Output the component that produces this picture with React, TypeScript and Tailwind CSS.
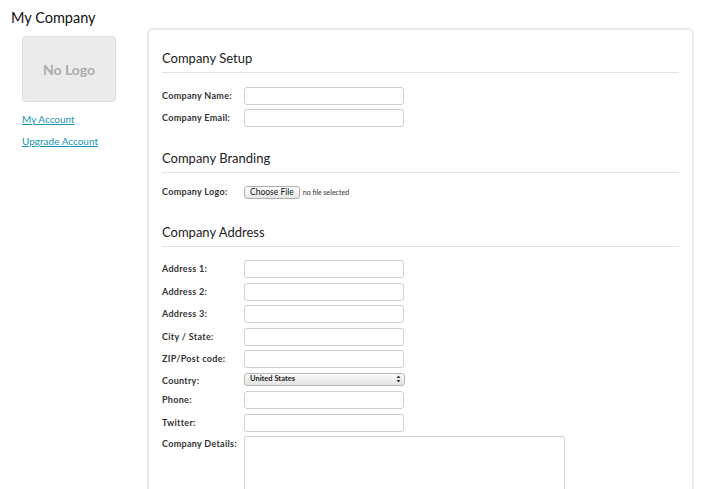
import React from "react";

const Field = ({ label }: { label: string }) => (
  <div className="flex items-center">
    <label className="w-[82px] shrink-0 text-[9px] font-bold tracking-[0.3px] text-[#333]">
      {label}
    </label>
    <input
      type="text"
      className="w-[160px] h-[18px] border border-[#cfcfcf] rounded-[3px] bg-white outline-none"
    />
  </div>
);

const SectionTitle = ({ children, className = "" }: { children: React.ReactNode; className?: string }) => (
  <h2
    className={`text-[13px] leading-[18px] text-[#222] pb-[5px] border-b border-[#e2e2e2] ${className}`}
  >
    {children}
  </h2>
);

const App = () => {
  return (
    <div className="min-h-screen bg-white font-['Lato','Open_Sans',sans-serif] text-[#222]">
      {/* Header */}
      <header className="h-[28px] pt-[9px] px-[11px]">
        <h1 className="text-[14.5px] leading-[18px] text-[#111]">My Company</h1>
      </header>

      <div className="flex">
        {/* Sidebar */}
        <aside className="w-[147px] shrink-0 pl-[22px] pt-[8px]">
          <div className="w-[94px] h-[66px] rounded-[4px] bg-[#ebebeb] border border-[#dedede] flex items-center justify-center">
            <span className="text-[14px] font-bold text-[#ababab]">No Logo</span>
          </div>
          <nav className="mt-[9px] flex flex-col gap-[6px] text-[10px] leading-[16px]">
            <a href="#" className="text-[#1b95ad] underline">
              My Account
            </a>
            <a href="#" className="text-[#1b95ad] underline">
              Upgrade Account
            </a>
          </nav>
        </aside>

        {/* Main panel */}
        <main className="flex-1 pr-[21px]">
          <div className="border-2 border-[#e8e8e8] rounded-[6px] px-[13px] pt-[19px] pb-[40px]">
            {/* Company Setup */}
            <SectionTitle>Company Setup</SectionTitle>
            <div className="mt-[14px] flex flex-col gap-[4px]">
              <Field label="Company Name:" />
              <Field label="Company Email:" />
            </div>

            {/* Company Branding */}
            <SectionTitle className="mt-[22px]">Company Branding</SectionTitle>
            <div className="mt-[10px] h-[18px] flex items-center">
              <label className="w-[82px] shrink-0 text-[9px] font-bold tracking-[0.3px] text-[#333]">
                Company Logo:
              </label>
              <button className="h-[13px] px-[5px] text-[8.5px] leading-[11px] text-[#111] border border-[#b0b0b0] rounded-[3px] bg-gradient-to-b from-white to-[#e6e6e6]">
                Choose File
              </button>
              <span className="ml-[3px] text-[7px] text-[#333]">no file selected</span>
            </div>

            {/* Company Address */}
            <SectionTitle className="mt-[22px]">Company Address</SectionTitle>
            <div className="mt-[13px] flex flex-col gap-[4.5px]">
              <Field label="Address 1:" />
              <Field label="Address 2:" />
              <Field label="Address 3:" />
              <Field label="City / State:" />
              <Field label="ZIP/Post code:" />
              <div className="flex items-center h-[13px]">
                <label className="w-[82px] shrink-0 text-[9px] leading-[13px] font-bold tracking-[0.3px] text-[#333] translate-y-[1px]">
                  Country:
                </label>
                <div className="w-[161px] h-[13px] flex items-center justify-between pl-[5px] pr-[3px] border border-[#b8b8b8] rounded-[3px] bg-gradient-to-b from-[#fafafa] to-[#e3e3e3]">
                  <span className="text-[7.5px] font-bold text-[#222]">United States</span>
                  <svg width="5" height="8" viewBox="0 0 5 8" className="text-[#333]">
                    <path d="M2.5 0.5 L4.5 3 L0.5 3 Z" fill="currentColor" />
                    <path d="M2.5 7.5 L4.5 5 L0.5 5 Z" fill="currentColor" />
                  </svg>
                </div>
              </div>
              <div className="mt-[1px] flex flex-col gap-[4.5px]">
                <Field label="Phone:" />
                <Field label="Twitter:" />
              </div>
              <div className="flex items-start">
                <label className="w-[82px] shrink-0 pt-[2px] text-[9px] leading-[12px] font-bold tracking-[0.3px] text-[#333]">
                  Company Details:
                </label>
                <textarea className="w-[321px] h-[92px] border border-[#cfcfcf] rounded-[2px] resize-none outline-none" />
              </div>
            </div>
          </div>
        </main>
      </div>
    </div>
  );
};

export default App;
